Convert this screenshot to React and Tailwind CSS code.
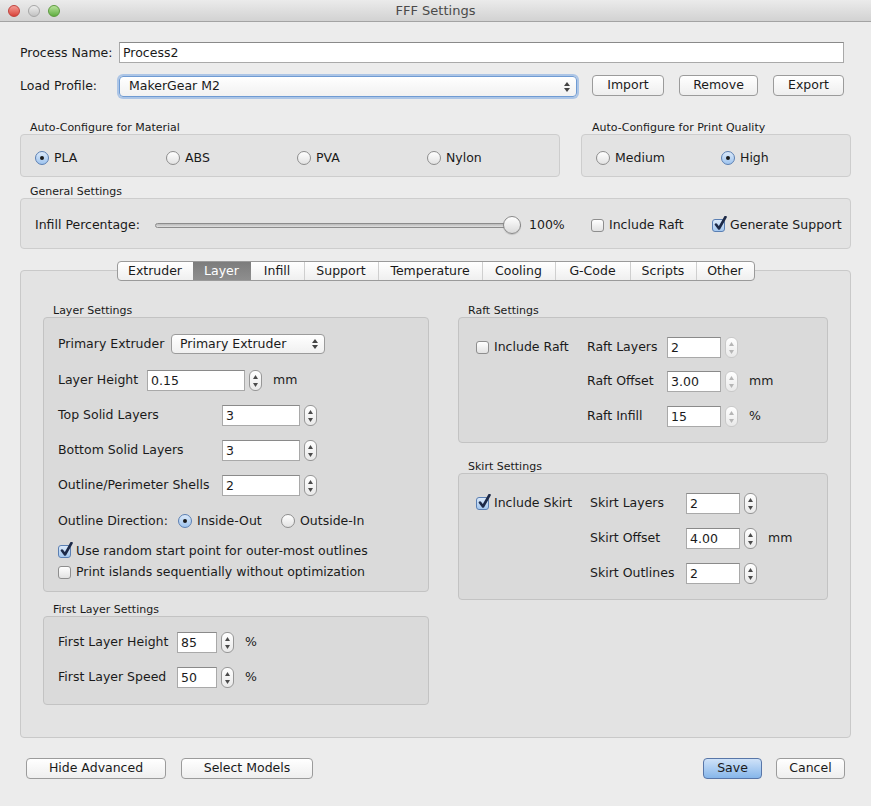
import React from "react";

const FONT = "font-['DejaVu_Sans','Liberation_Sans',sans-serif]";

// small up/down stepper next to number fields
const Stepper = ({ disabled }) => (
  <div
    className={`w-[13px] h-[21px] shrink-0 rounded-[6px] border bg-gradient-to-b from-white to-[#e9e9e9] flex flex-col items-center justify-center gap-[4px] ${
      disabled ? "border-[#c9c9c9]" : "border-[#979797]"
    }`}
  >
    <svg width="5" height="4" viewBox="0 0 5 4">
      <path d="M2.5 0L5 4H0z" fill={disabled ? "#b5b5b5" : "#4a4a4a"} />
    </svg>
    <svg width="5" height="4" viewBox="0 0 5 4">
      <path d="M0 0H5L2.5 4z" fill={disabled ? "#b5b5b5" : "#4a4a4a"} />
    </svg>
  </div>
);

const Field = ({ value, w, h = "h-[21px]" }) => (
  <div
    className={`${w} ${h} shrink-0 bg-white border border-[#a9a9a9] border-t-[#8a8a8a] pl-[3px] pt-[1px] flex items-center`}
  >
    {value}
  </div>
);

const UpDown = () => (
  <svg width="6" height="10" viewBox="0 0 6 10">
    <path d="M3 0L6 4H0z" fill="#444" />
    <path d="M0 6H6L3 10z" fill="#444" />
  </svg>
);

const Radio = ({ checked, label }) => (
  <div className="flex items-center gap-[5px]">
    <div
      className={`w-[14px] h-[14px] rounded-full border flex items-center justify-center ${
        checked
          ? "border-[#5a7fb3] bg-gradient-to-b from-[#dbe9f9] to-[#9fc4ee]"
          : "border-[#8e8e8e] bg-gradient-to-b from-white to-[#e2e2e2]"
      }`}
    >
      {checked && <div className="w-[4px] h-[4px] rounded-full bg-[#1b1b1b]" />}
    </div>
    <span>{label}</span>
  </div>
);

const Check = ({ checked, label }) => (
  <div className="flex items-center gap-[5px]">
    <div
      className={`relative w-[13px] h-[13px] rounded-[3px] border ${
        checked
          ? "border-[#5a7fb3] bg-gradient-to-b from-[#dbe9f9] to-[#a4c7ee]"
          : "border-[#8e8e8e] bg-gradient-to-b from-white to-[#e2e2e2]"
      }`}
    >
      {checked && (
        <svg
          className="absolute left-[1px] top-[-4px]"
          width="13"
          height="15"
          viewBox="0 0 13 15"
        >
          <path
            d="M2 8.5L5 12.5L11.5 1"
            fill="none"
            stroke="#1d2a48"
            strokeWidth="2.6"
            strokeLinecap="round"
            strokeLinejoin="round"
          />
        </svg>
      )}
    </div>
    <span>{label}</span>
  </div>
);

const Button = ({ label, w, primary }) => (
  <div
    className={`${w} h-[21px] shrink-0 rounded-[4px] border flex items-center justify-center ${
      primary
        ? "border-[#5876a8] bg-gradient-to-b from-[#cfe2f8] to-[#86b6ea]"
        : "border-[#9b9b9b] bg-gradient-to-b from-white to-[#eeeeee]"
    }`}
  >
    {label}
  </div>
);

const GroupLabel = ({ children, className = "" }) => (
  <div className={`h-[13px] text-[11px] leading-[13px] ${className}`}>
    {children}
  </div>
);

const TABS = [
  ["Extruder", "w-[75px]"],
  ["Layer", "w-[58px]"],
  ["Infill", "w-[53px]"],
  ["Support", "w-[74px]"],
  ["Temperature", "w-[104px]"],
  ["Cooling", "w-[73px]"],
  ["G-Code", "w-[75px]"],
  ["Scripts", "w-[66px]"],
  ["Other", "w-[58px]"],
];

const NumRow = ({ label, labelW, value, fieldW, unit, disabled, className = "" }) => (
  <div className={`flex items-center ${className}`}>
    <div className={`${labelW} shrink-0`}>{label}</div>
    <Field value={value} w={fieldW} />
    <div className="ml-[4px]">
      <Stepper disabled={disabled} />
    </div>
    {unit && <span className="ml-[11px]">{unit}</span>}
  </div>
);

export default function App() {
  return (
    <div
      className={`w-[871px] h-[806px] bg-[#ececec] overflow-hidden text-[12.5px] leading-none text-[#1a1a1a] ${FONT}`}
    >
      {/* title bar */}
      <div className="relative h-[22px] bg-gradient-to-b from-[#ebebeb] to-[#d2d2d2] border-b border-[#a3a3a3] flex items-center justify-center">
        <div className="absolute left-[8px] top-[5px] flex gap-[8px]">
          <div className="w-[12px] h-[12px] rounded-full border border-[#c0413b] bg-gradient-to-b from-[#f39a94] to-[#d8413a]" />
          <div className="w-[12px] h-[12px] rounded-full border border-[#a6a6a6] bg-gradient-to-b from-[#eeeeee] to-[#c2c2c2]" />
          <div className="w-[12px] h-[12px] rounded-full border border-[#5c9a3e] bg-gradient-to-b from-[#b8e39a] to-[#5fae3f]" />
        </div>
        <span className="text-[13px] text-[#4a4a4a]">FFF Settings</span>
      </div>

      <div className="px-5 pt-[20px]">
        {/* process name */}
        <div className="flex items-center pr-[7px]">
          <div className="w-[99px] shrink-0 pt-[1px]">Process Name:</div>
          <div className="flex-1 h-[21px] bg-white border border-[#a9a9a9] border-t-[#8a8a8a] pl-[3px] pt-[1px] flex items-center">
            Process2
          </div>
        </div>

        {/* load profile */}
        <div className="flex items-center mt-[11px] pr-[7px]">
          <div className="w-[99px] shrink-0 pt-[2px]">Load Profile:</div>
          <div className="w-[458px] h-[21px] mt-[2px] rounded-[4px] border border-[#6f9bd3] shadow-[0_0_0_2px_rgba(120,165,225,0.55)] bg-gradient-to-b from-white to-[#f1f1f1] flex items-center justify-between pl-[9px] pr-[6px]">
            <span>MakerGear M2</span>
            <UpDown />
          </div>
          <div className="ml-[15px]">
            <Button label="Import" w="w-[72px]" />
          </div>
          <div className="ml-[15px]">
            <Button label="Remove" w="w-[79px]" />
          </div>
          <div className="ml-[15px]">
            <Button label="Export" w="w-[71px]" />
          </div>
        </div>

        {/* auto configure */}
        <div className="flex mt-[24px] gap-[21px]">
          <div className="w-[540px]">
            <GroupLabel className="pl-[10px]">Auto-Configure for Material</GroupLabel>
            <div className="h-[43px] rounded-[4px] border border-[#cdcdcd] bg-[#e3e3e3] flex items-center pl-[14px] pt-[5px]">
              <div className="w-[131px]"><Radio checked label="PLA" /></div>
              <div className="w-[131px]"><Radio label="ABS" /></div>
              <div className="w-[130px]"><Radio label="PVA" /></div>
              <div><Radio label="Nylon" /></div>
            </div>
          </div>
          <div className="w-[270px]">
            <GroupLabel className="pl-[11px]">Auto-Configure for Print Quality</GroupLabel>
            <div className="h-[43px] rounded-[4px] border border-[#cdcdcd] bg-[#e3e3e3] flex items-center pl-[14px] pt-[5px]">
              <div className="w-[125px]"><Radio label="Medium" /></div>
              <div><Radio checked label="High" /></div>
            </div>
          </div>
        </div>

        {/* general settings */}
        <GroupLabel className="mt-[8px] pl-[10px]">General Settings</GroupLabel>
        <div className="h-[51px] rounded-[4px] border border-[#cdcdcd] bg-[#e3e3e3] flex items-center pl-[14px] pt-[3px]">
          <div className="w-[120px] shrink-0">Infill Percentage:</div>
          <div className="relative w-[366px] h-[20px] flex items-center">
            <div className="w-full h-[5px] rounded-full border border-[#8c8c8c] bg-gradient-to-b from-[#b9b9b9] to-[#e0e0e0]" />
            <div className="absolute right-0 top-[1px] w-[18px] h-[18px] rounded-full border border-[#8a8a8a] bg-gradient-to-b from-white to-[#dadada] shadow-[0_1px_1px_rgba(0,0,0,0.15)]" />
          </div>
          <div className="w-[70px] pl-[8px] shrink-0">100%</div>
          <div className="w-[121px] shrink-0"><Check label="Include Raft" /></div>
          <Check checked label="Generate Support" />
        </div>

        {/* tabs */}
        <div className="mt-[12px] relative z-10 flex justify-center -mb-[11px]">
          <div className="flex h-[20px] rounded-[4px] border border-[#9a9a9a] bg-gradient-to-b from-white to-[#efefef] overflow-hidden">
            {TABS.map(([t, w], i) => (
              <div
                key={t}
                className={`${w} flex items-center justify-center pt-[1px] ${
                  t === "Layer"
                    ? "bg-gradient-to-b from-[#7c7c7c] to-[#8e8e8e] text-white"
                    : ""
                } ${i > 0 && t !== "Layer" && TABS[i - 1][0] !== "Layer" ? "border-l border-[#cfcfcf]" : ""}`}
              >
                {t}
              </div>
            ))}
          </div>
        </div>
        <div className="h-[468px] rounded-[4px] border border-[#c9c9c9] bg-[#e3e3e3] pt-[33px] px-[22px] flex gap-[29px]">
          {/* left column */}
          <div className="w-[386px] shrink-0">
            <GroupLabel className="pl-[10px]">Layer Settings</GroupLabel>
            <div className="h-[275px] rounded-[4px] border border-[#c3c3c3] bg-[#dadada] pl-[14px] pt-[16px]">
              <div className="flex items-center">
                <div className="w-[113px] shrink-0">Primary Extruder</div>
                <div className="w-[154px] h-[20px] rounded-[4px] border border-[#9b9b9b] bg-gradient-to-b from-white to-[#f0f0f0] flex items-center justify-between pl-[8px] pr-[6px]">
                  <span>Primary Extruder</span>
                  <UpDown />
                </div>
              </div>
              <NumRow className="mt-[16px]" label="Layer Height" labelW="w-[89px]" value="0.15" fieldW="w-[98px]" unit="mm" />
              <NumRow className="mt-[14px]" label="Top Solid Layers" labelW="w-[164px]" value="3" fieldW="w-[78px]" />
              <NumRow className="mt-[14px]" label="Bottom Solid Layers" labelW="w-[164px]" value="3" fieldW="w-[78px]" />
              <NumRow className="mt-[14px]" label="Outline/Perimeter Shells" labelW="w-[164px]" value="2" fieldW="w-[78px]" />
              <div className="flex items-center mt-[18px] h-[14px]">
                <div className="w-[120px] shrink-0">Outline Direction:</div>
                <div className="w-[103px]"><Radio checked label="Inside-Out" /></div>
                <Radio label="Outside-In" />
              </div>
              <div className="mt-[16px] h-[14px] flex items-center">
                <Check checked label="Use random start point for outer-most outlines" />
              </div>
              <div className="mt-[7px] h-[14px] flex items-center">
                <Check label="Print islands sequentially without optimization" />
              </div>
            </div>

            <GroupLabel className="mt-[11px] pl-[10px]">First Layer Settings</GroupLabel>
            <div className="h-[89px] rounded-[4px] border border-[#c3c3c3] bg-[#dadada] pl-[14px] pt-[15px]">
              <NumRow label="First Layer Height" labelW="w-[119px]" value="85" fieldW="w-[40px]" unit="%" />
              <NumRow className="mt-[14px]" label="First Layer Speed" labelW="w-[119px]" value="50" fieldW="w-[40px]" unit="%" />
            </div>
          </div>

          {/* right column */}
          <div className="w-[370px] shrink-0">
            <GroupLabel className="pl-[10px]">Raft Settings</GroupLabel>
            <div className="h-[126px] rounded-[4px] border border-[#c3c3c3] bg-[#dadada] pl-[17px] pt-[19px] flex">
              <div className="w-[111px] shrink-0 h-[21px] flex items-center">
                <Check label="Include Raft" />
              </div>
              <div>
                <NumRow label="Raft Layers" labelW="w-[80px]" value="2" fieldW="w-[54px]" disabled />
                <NumRow className="mt-[13px]" label="Raft Offset" labelW="w-[80px]" value="3.00" fieldW="w-[54px]" unit="mm" disabled />
                <NumRow className="mt-[14px]" label="Raft Infill" labelW="w-[80px]" value="15" fieldW="w-[54px]" unit="%" disabled />
              </div>
            </div>

            <GroupLabel className="mt-[17px] pl-[10px]">Skirt Settings</GroupLabel>
            <div className="h-[127px] rounded-[4px] border border-[#c3c3c3] bg-[#dadada] pl-[17px] pt-[19px] flex">
              <div className="w-[114px] shrink-0 h-[21px] flex items-center">
                <Check checked label="Include Skirt" />
              </div>
              <div>
                <NumRow label="Skirt Layers" labelW="w-[96px]" value="2" fieldW="w-[54px]" />
                <NumRow className="mt-[14px]" label="Skirt Offset" labelW="w-[96px]" value="4.00" fieldW="w-[54px]" unit="mm" />
                <NumRow className="mt-[14px]" label="Skirt Outlines" labelW="w-[96px]" value="2" fieldW="w-[54px]" />
              </div>
            </div>
          </div>
        </div>

        {/* bottom buttons */}
        <div className="flex items-center mt-[20px] pl-[6px] pr-[6px]">
          <Button label="Hide Advanced" w="w-[140px]" />
          <div className="ml-[15px]">
            <Button label="Select Models" w="w-[132px]" />
          </div>
          <div className="ml-auto">
            <Button label="Save" w="w-[59px]" primary />
          </div>
          <div className="ml-[14px]">
            <Button label="Cancel" w="w-[69px]" />
          </div>
        </div>
      </div>
    </div>
  );
}
